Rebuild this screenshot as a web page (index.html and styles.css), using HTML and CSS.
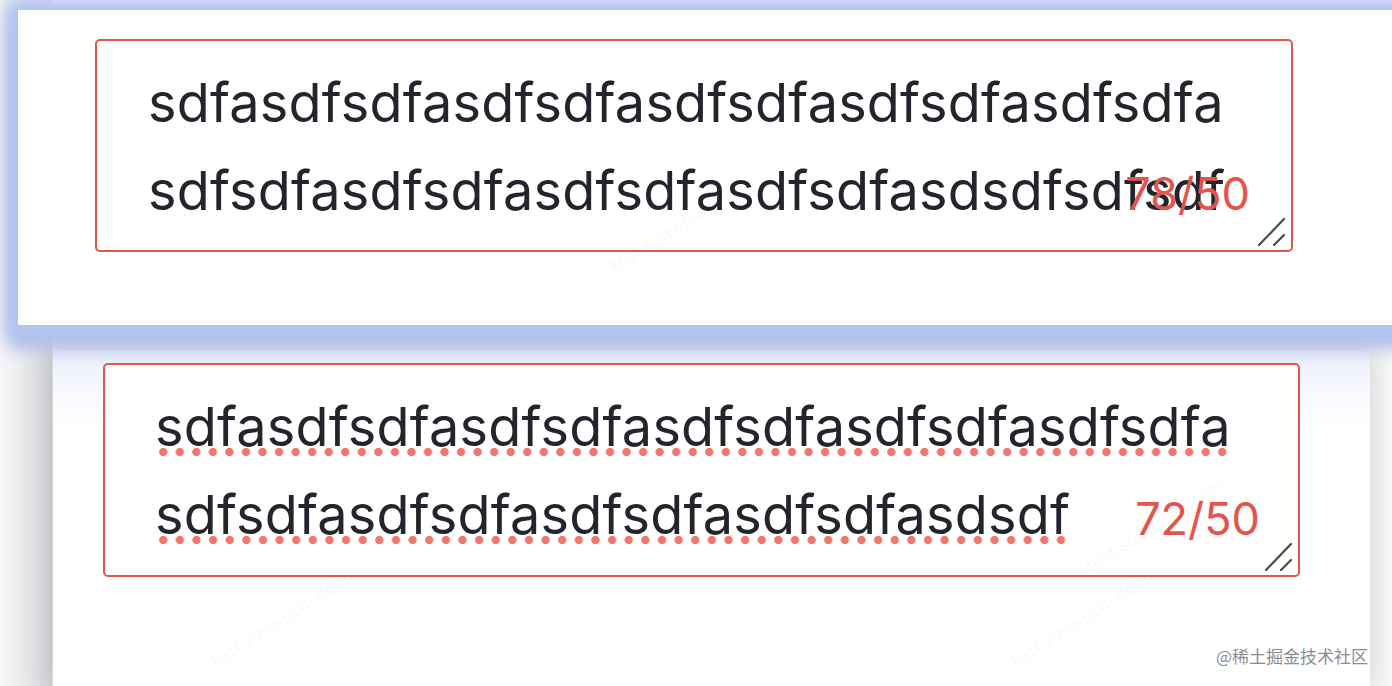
FILE: index.html
```html
<!DOCTYPE html>
<html lang="zh-CN">
<head>
<meta charset="utf-8">
<title>textarea</title>
<link rel="stylesheet" href="styles.css">
</head>
<body>
<div class="stage">
  <section class="panel panel-top">
    <div class="field field-top">
      <div class="text">
        <div class="line">sdfasdfsdfasdfsdfasdfsdfasdfsdfasdfsdfa</div>
        <div class="line">sdfsdfasdfsdfasdfsdfasdfsdfasdsdfsdfsdf</div>
      </div>
      <span class="count count-top">78/50</span>
      <svg class="grip" width="28" height="30" viewBox="0 0 28 30"><path d="M2 28 L27 2 M17 28 L27 18" stroke="#4a4a4a" stroke-width="2.2" stroke-linecap="round" fill="none"/></svg>
    </div>
    <span class="wm wm-1">test.sunwoshi.com</span>
  </section>
  <section class="panel panel-bottom">
    <div class="field field-bottom">
      <div class="text">
        <div class="line"><span class="spell">sdfasdfsdfasdfsdfasdfsdfasdfsdfasdfsdfa</span></div>
        <div class="line"><span class="spell">sdfsdfasdfsdfasdfsdfasdfsdfasdsdf</span></div>
      </div>
      <span class="count count-bottom">72/50</span>
      <svg class="grip" width="28" height="30" viewBox="0 0 28 30"><path d="M2 28 L27 2 M17 28 L27 18" stroke="#4a4a4a" stroke-width="2.2" stroke-linecap="round" fill="none"/></svg>
    </div>
    <span class="wm wm-2">test.sunwoshi.com</span>
    <span class="wm wm-3">test.sunwoshi.com</span>
    <span class="wm wm-4">test.sunwoshi.com</span>
  </section>
  <span class="credit">@稀土掘金技术社区</span>
</div>
</body>
</html>
```
FILE: styles.css
```css
html, body {
  margin: 0;
  padding: 0;
  background: #ffffff;
}
.stage {
  position: relative;
  width: 1392px;
  height: 686px;
  overflow: hidden;
  background: linear-gradient(90deg, #f6f6f8 0px, #dfe0e3 52px, #ffffff 53px);
  font-family: Inter, "Noto Sans", "Noto Sans CJK SC", sans-serif;
  display: flex;
  flex-direction: column;
}
.panel {
  position: relative;
  flex: none;
}
.panel-top {
  margin: 10px -20px 0 18px;
  height: 315px;
  background: #ffffff;
  box-shadow: 0 0 14px 12px #b4c5f2, 0 14px 16px 10px #aebde6;
  z-index: 2;
}
.panel-bottom {
  margin: 25px 22px 0 53px;
  height: 340px;
  background: linear-gradient(180deg, #eaeefa 0px, #f8f9fe 40px, #ffffff 80px);
  box-shadow: 0 0 30px 8px rgba(0, 0, 0, 0.16);
  z-index: 1;
}
.field {
  position: relative;
  box-sizing: border-box;
  height: 213px;
  width: 1198px;
  border: 2px solid #e0564c;
  border-radius: 5px;
  background: #ffffff;
  padding: 18px 50px;
}
.field-top {
  margin: 29px 0 0 77px;
  padding-left: 51px;
}
.field-bottom {
  margin: 13px 0 0 50px;
  width: 1197px;
  height: 214px;
}
.text {
  color: #22262c;
  font-size: 54px;
  line-height: 88px;
  letter-spacing: 0.2px;
  white-space: nowrap;
}
.spell {
  background-image: radial-gradient(circle at 50% 50%, #f0776d 0, #f0776d 3.8px, rgba(240, 119, 109, 0) 4.4px);
  background-size: 16.5px 10px;
  background-repeat: space no-repeat;
  background-position: 0 calc(100% - 2px);
}
.count {
  position: absolute;
  color: #e5544a;
  font-size: 45px;
  line-height: 45px;
  bottom: 34px;
}
.count-top {
  right: 41px;
}
.count-bottom {
  right: 38px;
}
.grip {
  position: absolute;
  right: 6px;
  bottom: 3px;
}
.wm {
  position: absolute;
  color: rgba(0, 0, 0, 0.04);
  font-size: 18px;
  transform: rotate(-32deg);
  transform-origin: left bottom;
  white-space: nowrap;
}
.wm-1 { left: 600px; top: 245px; }
.wm-2 { left: 165px; top: 300px; }
.wm-3 { left: 965px; top: 300px; }
.wm-4 { left: 1040px; top: 205px; }
.credit {
  position: absolute;
  right: 24px;
  top: 643px;
  color: #8a8d93;
  font-size: 17px;
  font-family: "Noto Sans CJK SC", sans-serif;
  z-index: 3;
}
```
